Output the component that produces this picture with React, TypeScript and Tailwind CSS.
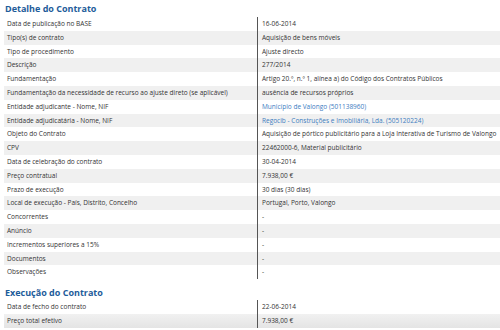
type Row = { label: string; value: string; link?: boolean }

const detalhe: Row[] = [
  { label: 'Data de publicação no BASE', value: '16-06-2014' },
  { label: 'Tipo(s) de contrato', value: 'Aquisição de bens móveis' },
  { label: 'Tipo de procedimento', value: 'Ajuste directo' },
  { label: 'Descrição', value: '277/2014' },
  { label: 'Fundamentação', value: 'Artigo 20.º, n.º 1, alínea a) do Código dos Contratos Públicos' },
  { label: 'Fundamentação da necessidade de recurso ao ajuste direto (se aplicável)', value: 'ausência de recursos próprios' },
  { label: 'Entidade adjudicante - Nome, NIF', value: 'Município de Valongo (501138960)', link: true },
  { label: 'Entidade adjudicatária - Nome, NIF', value: 'Regocib - Construções e Imobiliária, Lda. (505120224)', link: true },
  { label: 'Objeto do Contrato', value: 'Aquisição de pórtico publicitário para a Loja Interativa de Turismo de Valongo' },
  { label: 'CPV', value: '22462000-6, Material publicitário' },
  { label: 'Data de celebração do contrato', value: '30-04-2014' },
  { label: 'Preço contratual', value: '7.938,00 €' },
  { label: 'Prazo de execução', value: '30 dias (30 dias)' },
  { label: 'Local de execução - País, Distrito, Concelho', value: 'Portugal, Porto, Valongo' },
  { label: 'Concorrentes', value: '-' },
  { label: 'Anúncio', value: '-' },
  { label: 'Incrementos superiores a 15%', value: '-' },
  { label: 'Documentos', value: '-' },
  { label: 'Observações', value: '-' },
]

const execucao: Row[] = [
  { label: 'Data de fecho do contrato', value: '22-06-2014' },
  { label: 'Preço total efetivo', value: '7.938,00 €' },
]

const Table = ({ rows, fadeLast }: { rows: Row[]; fadeLast?: boolean }) => (
  <div className="ml-[4px]">
    {rows.map((r, i) => {
      const gray = i % 2 === 1
      const last = fadeLast && i === rows.length - 1
      return (
        <div
          key={r.label}
          className={`flex h-[13.8px] items-center ${
            last ? 'bg-gradient-to-b from-[#f1f1f1] to-[#e4e4e4]' : gray ? 'bg-[#f0f0f0]' : 'bg-white'
          }`}
        >
          <div className="w-[253px] pl-[3px] truncate">{r.label}</div>
          <div className="h-full border-l border-[#555] pl-[4px] flex items-center">
            <span className={r.link ? 'text-[#3d7dbf]' : ''}>{r.value}</span>
          </div>
        </div>
      )
    })}
  </div>
)

export default function App() {
  return (
    <div
      className="w-[500px] h-[330px] overflow-hidden bg-white text-[6.5px] text-[#333]"
      style={{ fontFamily: '"Open Sans", sans-serif' }}
    >
      <h2 className="h-[17px] pl-[5px] pt-[3px] text-[9px] font-bold leading-[11px] text-[#1e5c9a]">
        Detalhe do Contrato
      </h2>
      <Table rows={detalhe} />
      <h2 className="h-[21px] pl-[5px] pt-[8px] text-[9px] font-bold leading-[11px] text-[#1e5c9a]">
        Execução do Contrato
      </h2>
      <Table rows={execucao} fadeLast />
    </div>
  )
}
